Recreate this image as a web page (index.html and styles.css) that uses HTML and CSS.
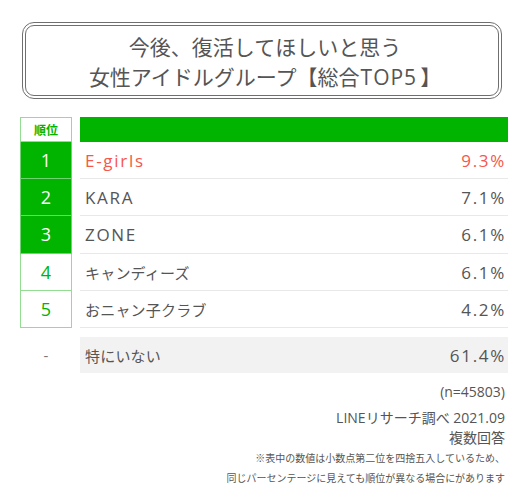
FILE: index.html
```html
<!DOCTYPE html>
<html lang="ja">
<head>
<meta charset="utf-8">
<link rel="stylesheet" href="styles.css">
</head>
<body>
<div class="page">
  <div class="title">
    <div>今後、復活してほしいと思う</div>
    <div>女性アイドルグループ【総合<span class="latin">TOP5</span>】</div>
  </div>
  <div class="table">
    <div class="row head">
      <div class="rank">順位</div>
      <div class="bar"></div>
    </div>
    <div class="row">
      <div class="rank top">1</div>
      <div class="cell red"><span>E-girls</span><span>9.3%</span></div>
    </div>
    <div class="row">
      <div class="rank top">2</div>
      <div class="cell"><span>KARA</span><span>7.1%</span></div>
    </div>
    <div class="row">
      <div class="rank top">3</div>
      <div class="cell"><span>ZONE</span><span>6.1%</span></div>
    </div>
    <div class="row">
      <div class="rank low">4</div>
      <div class="cell"><span class="jp">キャンディーズ</span><span>6.1%</span></div>
    </div>
    <div class="row">
      <div class="rank low">5</div>
      <div class="cell"><span class="jp">おニャン子クラブ</span><span>4.2%</span></div>
    </div>
    <div class="row none">
      <div class="rank dash">-</div>
      <div class="cell gray"><span class="jp">特にいない</span><span>61.4%</span></div>
    </div>
  </div>
  <div class="foot">
    <div class="n">(n=45803)</div>
    <div class="src">LINEリサーチ調べ 2021.09</div>
    <div class="src">複数回答</div>
    <div class="note">※表中の数値は小数点第二位を四捨五入しているため、</div>
    <div class="note">同じパーセンテージに見えても順位が異なる場合にがあります</div>
  </div>
</div>
</body>
</html>
```
FILE: styles.css
```css
* { box-sizing: border-box; }
html, body { margin: 0; padding: 0; background: #fff; }
body {
  font-family: "Open Sans", "Noto Sans CJK JP", sans-serif;
  color: #555;
  width: 530px;
  height: 499px;
  overflow: hidden;
}
.page {
  padding: 22px 22px 0 20px;
}
.title {
  margin-left: 2px;
  width: 480px;
  height: 77px;
  border: 4px double #6f6f6f;
  border-radius: 12px;
  display: flex;
  flex-direction: column;
  justify-content: center;
  align-items: center;
  font-family: "Noto Sans CJK JP", sans-serif;
  font-size: 21px;
  line-height: 30px;
  color: #555;
  padding: 1px 0 0 6px;
}
.title .latin {
  font-family: "Open Sans", sans-serif;
  letter-spacing: 1px;
  margin-left: 1px;
  margin-right: 3px;
}
.table {
  margin-top: 18px;
  display: flex;
  flex-direction: column;
}
.row {
  display: flex;
  gap: 8px;
  height: 37.2px;
}
.row.head { height: 25px; }
.rank {
  width: 52px;
  flex: none;
  display: flex;
  align-items: center;
  justify-content: center;
  border: 1px solid #93dd93;
  border-top-width: 0;
  font-size: 18px;
}
.head .rank {
  border-top-width: 1px;
  background: #fff;
  color: #00b400;
  font-family: "Noto Sans CJK JP", sans-serif;
  font-weight: 700;
  font-size: 12px;
}
.rank.top { background: #00b400; color: #fff; border-color: #6fd36f; }
.rank.low { color: #00b400; background: #fff; }
.rank.dash { border: none; color: #777; font-size: 15px; }
.bar { flex: 1; background: #00b400; }
.cell {
  flex: 1;
  display: flex;
  align-items: center;
  justify-content: space-between;
  padding: 1px 2px 0 5px;
  border-bottom: 1px solid #e8e8e8;
  font-size: 17px;
  letter-spacing: 1.7px;
  color: #555;
}
.cell .jp {
  font-family: "Noto Sans CJK JP", sans-serif;
  font-size: 15px;
  letter-spacing: 0.2px;
}
.cell.red { color: #f5574a; }
.row.none { margin-top: 9px; height: 36px; }
.cell.gray { background: #f2f2f2; border-bottom: none; }
.foot {
  text-align: right;
  padding-right: 3px;
  font-family: "Open Sans", "Noto Sans CJK JP", sans-serif;
  color: #555;
}
.n { font-size: 14px; margin-top: 10px; line-height: 18px; }
.src { font-size: 14px; line-height: 20px; }
.foot .src:nth-child(2) { margin-top: 7px; }
.note { font-size: 10px; line-height: 20px; font-family: "Noto Sans CJK JP", sans-serif; }
```
